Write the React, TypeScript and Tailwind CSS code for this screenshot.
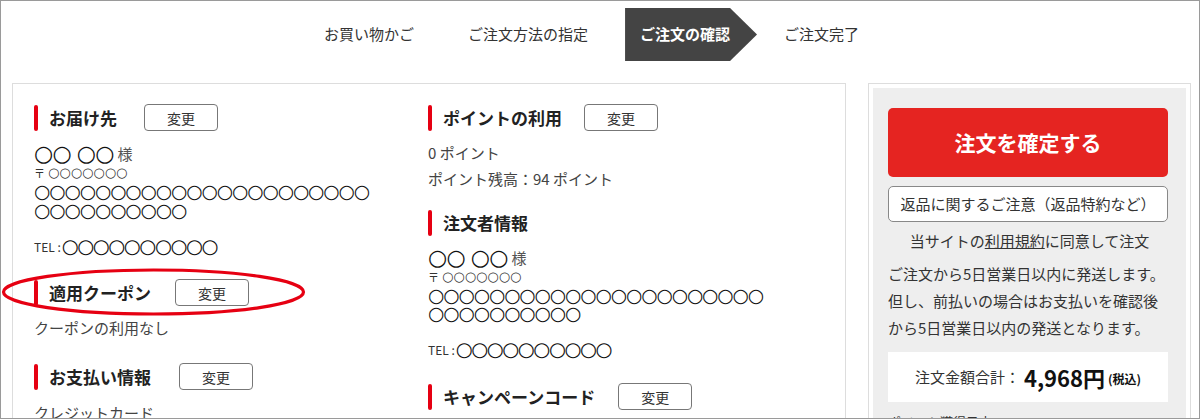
const FONT = "font-['Noto_Sans_CJK_JP','Noto_Sans',sans-serif]";
const CIRCLE = "font-['DejaVu_Sans',sans-serif]";

const Heading = ({ title, gap }: { title: string; gap: string }) => (
  <div className="flex h-[27px] items-center">
    <span className="h-[26px] w-[4px] rounded-full bg-[#e60012]" />
    <span className="ml-[11px] text-[17px] font-bold leading-none text-[#222]">
      {title}
    </span>
    <button
      className={`${gap} flex h-[27px] w-[74px] items-center justify-center rounded-[4px] border border-[#777] bg-white text-[14px] leading-none text-[#333]`}
    >
      変更
    </button>
  </div>
);

const Address = ({ lineGap }: { lineGap: string }) => (
  <>
    <div className="flex h-[20px] items-center text-[#111]">
      <span className={`${CIRCLE} text-[22px] leading-[20px] tracking-[-0.8px]`}>○○</span>
      <span className={`${CIRCLE} ml-[6px] text-[22px] leading-[20px] tracking-[-0.8px]`}>○○</span>
      <span className="ml-[4px] text-[15px] leading-[20px] text-[#555]">様</span>
    </div>
    <div className="flex h-[18px] items-center text-[#333]">
      <span className="text-[11px] leading-[18px]">〒</span>
      <span className={`${CIRCLE} ml-[3px] text-[13px] leading-[18px]`}>○○○○○○○</span>
    </div>
    <div
      className={`${CIRCLE} w-[340px] break-all text-[19px] ${lineGap} tracking-[-1.35px] text-[#111]`}
    >
      ○○○○○○○○○○○○○○○○○○○○○○○○○○○○○○○○
    </div>
  </>
);

const Tel = ({ mt }: { mt: string }) => (
  <div className={`${mt} flex h-[20px] items-center`}>
    <span className="text-[12px] leading-[20px] text-[#333]">TEL : </span>
    <span className={`${CIRCLE} ml-[1px] text-[19.5px] leading-[20px] tracking-[-1.5px] text-[#111]`}>
      ○○○○○○○○○○
    </span>
  </div>
);

export default function App() {
  return (
    <div
      className={`relative h-[419px] w-[1200px] overflow-hidden border border-[#9a9a9a] bg-white text-[#333] ${FONT}`}
    >
      <div className="h-[82px] pt-[7px]">
        <div className="flex h-[53px] items-center pl-[323px] text-[15px]">
          <span>お買い物かご</span>
          <span className="ml-[54px]">ご注文方法の指定</span>
          <div className="ml-[37px] flex h-[53px] w-[132px] items-center bg-[#444] pl-[15px] font-bold text-white [clip-path:polygon(0_0,105px_0,132px_50%,105px_100%,0_100%)]">
            ご注文の確認
          </div>
          <span className="ml-[27px]">ご注文完了</span>
        </div>
      </div>

      <div className="flex items-start gap-[22px] pl-[11px]">
        <div className="grid h-[340px] w-[834px] grid-cols-[394px_1fr] border border-[#ddd] px-[21px] pt-[20px]">
          <div className="flex flex-col">
            <Heading title="お届け先" gap="ml-[27px]" />
            <div className="mt-[13px]">
              <Address lineGap="leading-[19px]" />
            </div>
            <Tel mt="mt-[17px]" />
            <div className="mt-[22px]">
              <Heading title="適用クーポン" gap="ml-[24px]" />
            </div>
            <div className="mt-[12px] text-[15px] leading-[20px] text-[#444]">
              クーポンの利用なし
            </div>
            <div className="mt-[25px]">
              <Heading title="お支払い情報" gap="ml-[28px]" />
            </div>
            <div className="mt-[13px] text-[15px] leading-[20px] text-[#444]">
              クレジットカード
            </div>
          </div>

          <div className="flex flex-col">
            <Heading title="ポイントの利用" gap="ml-[22px]" />
            <div className="mt-[9px] text-[15px] leading-[26px] text-[#444]">
              <div>0 ポイント</div>
              <div>ポイント残高：94 ポイント</div>
            </div>
            <div className="mt-[17px]">
              <Heading title="注文者情報" gap="hidden" />
            </div>
            <div className="mt-[12px]">
              <Address lineGap="leading-[18px]" />
            </div>
            <Tel mt="mt-[18px]" />
            <div className="mt-[23px]">
              <Heading title="キャンペーンコード" gap="ml-[23px]" />
            </div>
          </div>
        </div>

        <div className="w-[323px] border border-[#ddd] p-[4px]">
          <div className="h-[400px] bg-[#eee] px-[15px] pt-[20px]">
            <button className="flex h-[69px] w-[280px] items-center justify-center rounded-[5px] bg-[#e52421] text-[21px] font-bold text-white">
              注文を確定する
            </button>
            <button className="mt-[9px] flex h-[36px] w-[280px] items-center justify-center rounded-[5px] border border-[#888] bg-white text-[15px] text-[#333]">
              返品に関するご注意（返品特約など）
            </button>
            <p className="mt-[9px] text-center text-[15px] leading-[20px] text-[#333]">
              当サイトの<span className="underline">利用規約</span>に同意して注文
            </p>
            <p className="mt-[9px] text-[15px] leading-[27px] text-[#333]">
              ご注文から5日営業日以内に発送します。
              <br />
              但し、前払いの場合はお支払いを確認後
              <br />
              から5日営業日以内の発送となります。
            </p>
            <div className="mt-[11px] flex h-[50px] w-[280px] items-center justify-center bg-white">
              <span className="text-[15px] text-[#333]">注文金額合計：</span>
              <span className="ml-[4px] text-[22px] font-bold text-[#111]">4,968円</span>
              <span className="ml-[3px] mt-[4px] text-[12px] font-bold text-[#111]">(税込)</span>
            </div>
            <div className="mt-[10px] text-[13px] text-[#333]">ポイント獲得予定</div>
          </div>
        </div>
      </div>

      <svg
        className="pointer-events-none absolute left-0 top-[265px]"
        width="310"
        height="52"
        viewBox="0 0 310 52"
      >
        <ellipse cx="152.5" cy="26" rx="150" ry="22" fill="none" stroke="#e60012" strokeWidth="3.2" />
      </svg>
    </div>
  );
}
